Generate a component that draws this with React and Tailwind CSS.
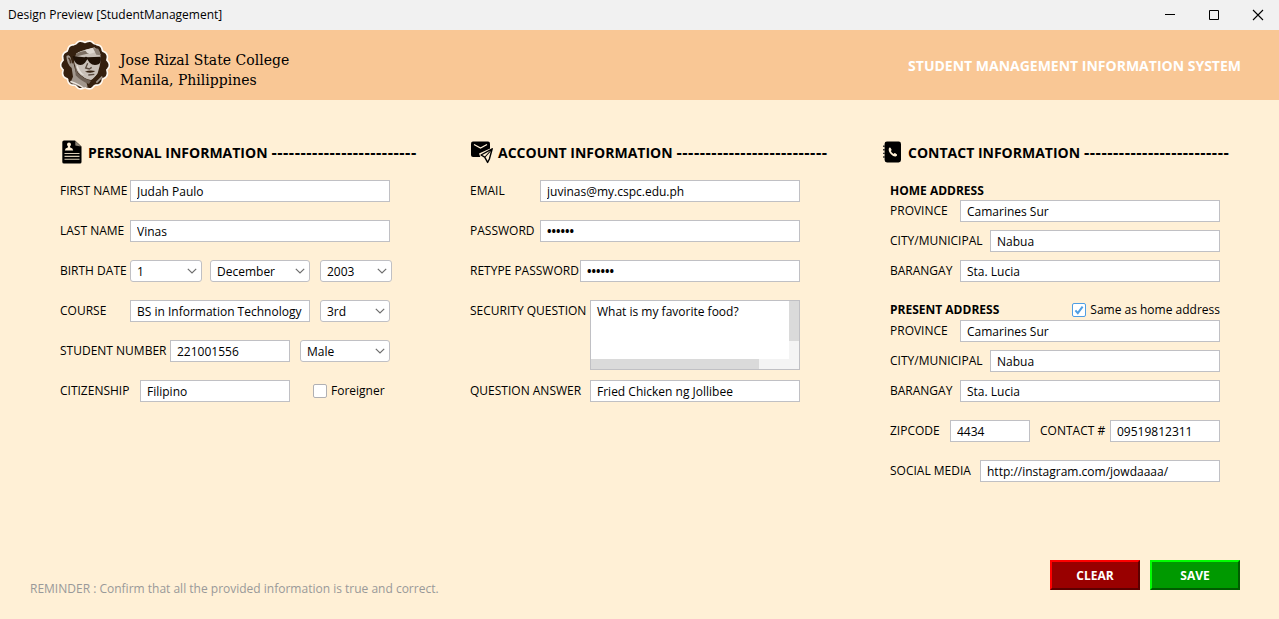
import React from "react";

const inputClass =
  "h-[22px] min-w-0 rounded-none border border-[#c0c0c4] bg-white px-[6px] text-[12px] leading-[20px] text-black outline-none";

function Field({ id, label, labelClass, inputWidth = "flex-1", type = "text", value, children }) {
  const weight = type === "password" ? "font-bold" : "";
  return (
    <div className="flex h-[22px] items-center">
      <label htmlFor={id} className={`shrink-0 whitespace-nowrap leading-[20px] ${labelClass}`}>
        {label}
      </label>
      <input id={id} type={type} defaultValue={value} className={`${inputClass} ${inputWidth} ${weight}`} />
      {children}
    </div>
  );
}

function Choice({ id, label, width, options, className = "" }) {
  return (
    <div className={`relative shrink-0 ${width} ${className}`}>
      <select
        id={id}
        aria-label={label}
        defaultValue={options[0]}
        className="block h-[22px] w-full appearance-none rounded-[3px] border border-[#c0c0c4] bg-white pt-px pr-5 pl-[6px] text-[12px] leading-[20px] text-black outline-none"
      >
        {options.map((o) => (
          <option key={o}>{o}</option>
        ))}
      </select>
      <svg viewBox="0 0 10 6" aria-hidden="true" className="pointer-events-none absolute top-2 right-[5px] h-[6px] w-[10px]">
        <path d="M0.8 0.8 L5 5 L9.2 0.8" fill="none" stroke="#6e6e6e" strokeWidth="1.2" />
      </svg>
    </div>
  );
}

function Tick({ id, label, checked, className = "" }) {
  return (
    <div className={`flex h-5 items-center gap-1 ${className}`}>
      <span className="relative block size-[14px] shrink-0">
        <input
          id={id}
          type="checkbox"
          defaultChecked={checked}
          className="peer block size-[14px] appearance-none rounded-[2px] border border-[#b0b0b4] bg-white checked:border-[#4f9ee3]"
        />
        <svg viewBox="0 0 14 14" aria-hidden="true" className="pointer-events-none absolute inset-0 hidden size-[14px] peer-checked:block">
          <path d="M3.4 7.4 L5.8 10.2 L10.6 3.6" fill="none" stroke="#4f9ee3" strokeWidth="2" />
        </svg>
      </span>
      <label htmlFor={id} className="whitespace-nowrap leading-[22px]">
        {label}
      </label>
    </div>
  );
}

function Heading({ icon, title, dashes }) {
  return (
    <div className="flex h-6 items-center">
      <span className="w-7 shrink-0">{icon}</span>
      <h2 className="pt-[2px] text-[14px] leading-[20px] font-bold whitespace-nowrap">
        {title} <span className="font-['DejaVu_Sans',sans-serif]">{"-".repeat(dashes)}</span>
      </h2>
    </div>
  );
}

function ResumeIcon() {
  return (
    <svg viewBox="0 0 24 24" className="size-6" aria-hidden="true">
      <path d="M4 0.5 H15 L21.5 6.5 V22 Q21.5 23.5 20 23.5 H4 Q2.3 23.5 2.3 22 V2 Q2.3 0.5 4 0.5Z" fill="#000" />
      <path d="M15.3 1 L21 6.4 L15.3 5.6Z" fill="#8d8577" />
      <circle cx="9" cy="4.5" r="2" fill="#fff0d6" />
      <path d="M8 6 H10 L10.2 7.6 Q13 8 13.2 10.4 H4.8 Q5 8 7.8 7.6Z" fill="#fff0d6" />
      <path d="M4.5 13.5 H19.5 M4.5 16.4 H19.5 M4.5 19.3 H19.5" stroke="#d8cbb5" strokeWidth="1.1" />
    </svg>
  );
}

function MailIcon() {
  return (
    <svg viewBox="0 0 24 24" className="size-6" aria-hidden="true">
      <rect x="1" y="1.6" width="19" height="15.5" rx="2" fill="#000" />
      <path d="M4 4.5 L10.5 8 L17 4.5" fill="none" stroke="#fff0d6" strokeWidth="1.3" />
      <path d="M23.5 7 L9 13.6 L10.5 17.6 L14 18.6 L16.3 23 L19 23Z" fill="#fff0d6" />
      <path d="M22.2 8.8 L11 15 L14.7 17.2 L17.6 22.4 L19.4 19Z" fill="#fff0d6" stroke="#000" strokeWidth="1.4" strokeLinejoin="round" />
      <path d="M21.4 10 L15 17" stroke="#000" strokeWidth="1.1" />
    </svg>
  );
}

function PhoneBookIcon() {
  return (
    <svg viewBox="0 0 24 24" className="size-6" aria-hidden="true">
      <rect x="4.6" y="1.5" width="16.4" height="21" rx="2.4" fill="#000" />
      <path d="M3 6.2 H5 M3 9.8 H5 M3 13.4 H5 M3 17 H5" stroke="#3b3833" strokeWidth="1.4" />
      <path
        d="M8.9 8.2 Q9.5 7 10.5 7.8 L11.6 9.8 Q11.5 10.6 10.8 11 Q11.7 13.1 13.7 13.9 Q14.3 13 15 13.1 L17 14.4 Q17.5 15.5 16.1 16.2 Q13.8 17 11 14.2 Q8 11 8.9 8.2Z"
        fill="#fff0d6"
      />
    </svg>
  );
}

const BADGE_POINTS = Array.from({ length: 144 }, (_, i) => {
  const a = (i / 144) * Math.PI * 2;
  const r = 67 + 6 * Math.abs(Math.cos(a * 7));
  return `${(90 + r * Math.cos(a)).toFixed(1)},${(87 + r * Math.sin(a)).toFixed(1)}`;
}).join(" ");

function Crest() {
  return (
    <svg viewBox="15 12 150 150" className="size-[50px] shrink-0" role="img" aria-label="College crest">
      <polygon points={BADGE_POINTS} fill="#35200f" stroke="#fffaf3" strokeWidth="5" strokeLinejoin="round" />
      <path d="M34 60 Q40 52 50 66 L56 84 L62 108 L92 132 L98 152 L84 155 Q62 148 46 140 L54 122 L50 96 Q36 86 34 60Z" fill="#a2978d" />
      <path d="M56 62 Q62 50 76 46 L96 40 L118 34 L134 48 L138 68 L134 90 L128 112 Q118 130 108 132 Q86 128 70 110 Q58 96 56 62Z" fill="#c9c0b8" />
      <path d="M60 56 Q76 44 98 44 L104 52 L84 56 L62 62Z" fill="#7c6e62" />
      <path d="M90 42 L114 35 L122 48 L104 54 L96 50Z" fill="#ded7d0" />
      <path d="M114 36 L130 38 L138 58 L124 56Z" fill="#8b7e73" />
      <path d="M34 62 Q36 36 62 26 Q94 16 126 28 Q112 38 94 38 Q78 42 64 52 L57 72 L52 84 L46 62 Q40 52 34 62Z" fill="#35200f" />
      <path d="M53 60 L88 64 Q93 61 98 64 L137 62 Q140 76 132 84 Q116 92 104 80 L97 70 L90 80 Q80 92 66 84 Q56 76 53 60Z" fill="#211207" />
      <path d="M60 84 L68 110 Q84 128 108 134 L102 144 Q78 136 62 118Z" fill="#6f6156" />
      <path d="M98 82 L92 96 L103 99 L110 94" fill="none" stroke="#5b4b3f" strokeWidth="4" />
      <path d="M90 107 Q104 101 121 105 Q110 114 90 107Z" fill="#35200f" />
      <path d="M100 117 L118 115" stroke="#5b4b3f" strokeWidth="4" />
      <path d="M68 88 Q74 108 88 118 L78 115 Q66 104 65 90Z" fill="#e6e0da" />
      <path d="M40 66 Q46 68 47 82" fill="none" stroke="#4c3828" strokeWidth="5" />
      <path d="M46 136 Q72 144 86 157" fill="none" stroke="#eee8e2" strokeWidth="4" />
      <path d="M108 134 L126 116 L142 124 L118 146 Z" fill="#35200f" />
      <path d="M124 140 L142 122" stroke="#a2978d" strokeWidth="5" />
    </svg>
  );
}

function AddressFields({ prefix }) {
  return (
    <div className="flex flex-col gap-2">
      <Field id={`${prefix}-province`} label="PROVINCE" labelClass="w-[70px]" value="Camarines Sur" />
      <Field id={`${prefix}-city`} label="CITY/MUNICIPAL" labelClass="w-[100px]" value="Nabua" />
      <Field id={`${prefix}-barangay`} label="BARANGAY" labelClass="w-[70px]" value="Sta. Lucia" />
    </div>
  );
}

const windowButton = "flex h-[30px] w-11 items-center justify-center pl-[2px]";
const actionButton =
  "h-[30px] w-[90px] border-2 pt-[2px] text-[12px] leading-[20px] font-bold text-white";

export default function App() {
  return (
    <div className="flex min-h-screen flex-col bg-[#fff0d6] font-['Open_Sans','Noto_Sans',sans-serif] text-[12px] text-black">
      <div className="flex h-[30px] items-center justify-between bg-[#f1f1f1] pl-2">
        <span className="leading-[20px]">Design Preview [StudentManagement]</span>
        <div className="flex">
          <button type="button" aria-label="Minimize" className={windowButton}>
            <svg viewBox="0 0 12 12" className="size-3"><path d="M1 5.5 H11" stroke="#000" /></svg>
          </button>
          <button type="button" aria-label="Maximize" className={windowButton}>
            <svg viewBox="0 0 12 12" className="size-3"><path d="M1.5 1.5 H10.5 V10.5 H1.5Z" fill="none" stroke="#000" /></svg>
          </button>
          <button type="button" aria-label="Close" className={windowButton}>
            <svg viewBox="0 0 12 12" className="size-3"><path d="M1 1 L11 11 M11 1 L1 11" stroke="#000" strokeWidth="1.1" /></svg>
          </button>
        </div>
      </div>

      <header className="flex h-[70px] items-center justify-between bg-[#f9c795] pr-[38px] pl-[60px]">
        <div className="flex items-center gap-[10px]">
          <Crest />
          <p className="pt-[10px] font-['DejaVu_Serif',serif] text-[14px] leading-[20px]">
            Jose Rizal State College
            <br />
            Manila, Philippines
          </p>
        </div>
        <h1 className="pt-[2px] text-[14px] leading-[20px] font-bold text-white">STUDENT MANAGEMENT INFORMATION SYSTEM</h1>
      </header>

      <form className="flex flex-1 flex-col justify-between" onSubmit={(e) => e.preventDefault()}>
        <div className="grid grid-cols-3 gap-[50px] pt-10 pr-[39px] pl-[60px]">
          <section>
            <Heading icon={<ResumeIcon />} title="PERSONAL INFORMATION" dashes={25} />
            <div className="mt-4 mr-[30px] flex flex-col gap-[18px]">
              <Field id="first" label="FIRST NAME" labelClass="w-[70px]" value="Judah Paulo" />
              <Field id="last" label="LAST NAME" labelClass="w-[70px]" value="Vinas" />
              <div className="flex h-[22px] items-center">
                <label htmlFor="day" className="w-[70px] shrink-0 leading-[20px] whitespace-nowrap">BIRTH DATE</label>
                <Choice id="day" label="Birth day" width="w-[72px]" options={["1", "2", "3"]} />
                <Choice id="month" label="Birth month" width="w-[100px]" className="ml-2" options={["December", "January"]} />
                <Choice id="year" label="Birth year" width="w-[72px]" className="ml-[10px]" options={["2003", "2004"]} />
              </div>
              <Field id="course" label="COURSE" labelClass="w-[70px]" value="BS in Information Technology">
                <Choice id="level" label="Year level" width="w-[70px]" className="ml-[10px]" options={["3rd", "4th"]} />
              </Field>
              <Field id="number" label="STUDENT NUMBER" labelClass="w-[110px]" value="221001556">
                <Choice id="sex" label="Sex" width="w-[90px]" className="ml-[10px]" options={["Male", "Female"]} />
              </Field>
              <Field id="citizenship" label="CITIZENSHIP" labelClass="w-[80px]" value="Filipino">
                <Tick id="foreigner" label="Foreigner" className="ml-[23px] w-[77px]" />
              </Field>
            </div>
          </section>

          <section>
            <Heading icon={<MailIcon />} title="ACCOUNT INFORMATION" dashes={26} />
            <div className="mt-4 mr-[30px] flex flex-col gap-[18px]">
              <Field id="email" label="EMAIL" labelClass="w-[70px]" value="juvinas@my.cspc.edu.ph" />
              <Field id="password" type="password" label="PASSWORD" labelClass="w-[70px]" value="secret" />
              <Field id="retype" type="password" label="RETYPE PASSWORD" labelClass="w-[110px]" value="secret" />
              <div className="flex flex-col gap-[10px]">
                <div className="flex h-[70px] items-start">
                  <label htmlFor="question" className="w-[120px] shrink-0 leading-[22px] whitespace-nowrap">SECURITY QUESTION</label>
                  <div className="flex h-full min-w-0 flex-1 flex-col border border-[#c0c0c4] bg-[#f4f4f4]">
                    <div className="flex min-h-0 flex-1">
                      <textarea
                        id="question"
                        defaultValue="What is my favorite food?"
                        className="block min-w-0 flex-1 resize-none overflow-hidden bg-white px-[6px] text-[12px] leading-[22px] outline-none"
                      />
                      <div className="h-10 w-[10px] bg-[#dadada]" />
                    </div>
                    <div className="h-[10px]">
                      <div className="h-full w-[81%] bg-[#dadada]" />
                    </div>
                  </div>
                </div>
                <Field id="answer" label="QUESTION ANSWER" labelClass="w-[120px]" value="Fried Chicken ng Jollibee" />
              </div>
            </div>
          </section>

          <section>
            <Heading icon={<PhoneBookIcon />} title="CONTACT INFORMATION" dashes={25} />
            <div className="mt-4 mr-5 ml-[10px] flex flex-col gap-[18px]">
              <div>
                <h3 className="h-5 leading-[22px] font-bold">HOME ADDRESS</h3>
                <AddressFields prefix="home" />
              </div>
              <div>
                <div className="flex h-5 items-center justify-between">
                  <h3 className="leading-[22px] font-bold">PRESENT ADDRESS</h3>
                  <Tick id="same" label="Same as home address" checked />
                </div>
                <AddressFields prefix="present" />
              </div>
              <div className="flex gap-[10px]">
                <Field id="zip" label="ZIPCODE" labelClass="w-[60px]" inputWidth="w-[80px]" value="4434" />
                <div className="min-w-0 flex-1">
                  <Field id="contact" label="CONTACT #" labelClass="w-[70px]" inputWidth="w-full" value="09519812311" />
                </div>
              </div>
              <Field id="social" label="SOCIAL MEDIA" labelClass="w-[90px]" value="http://instagram.com/jowdaaaa/" />
            </div>
          </section>
        </div>

        <div className="flex items-end justify-between pt-6 pr-[39px] pb-5 pl-[30px]">
          <p className="leading-[20px] text-[#999999]">
            REMINDER : Confirm that all the provided information is true and correct.
          </p>
          <div className="mb-[9px] flex gap-[10px]">
            <button type="reset" className={`${actionButton} border-t-[#ff0000] border-r-[#5c0000] border-b-[#5c0000] border-l-[#ff0000] bg-[#990000]`}>
              CLEAR
            </button>
            <button type="submit" className={`${actionButton} border-t-[#00ff00] border-r-[#005c00] border-b-[#005c00] border-l-[#00ff00] bg-[#009900]`}>
              SAVE
            </button>
          </div>
        </div>
      </form>
    </div>
  );
}
